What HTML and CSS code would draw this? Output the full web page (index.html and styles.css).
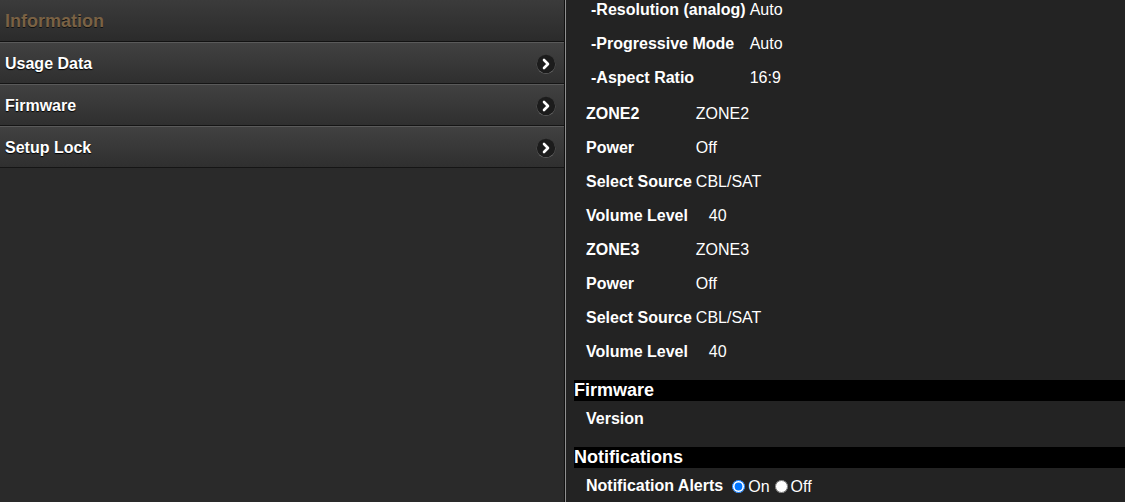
FILE: index.html
```html
<!DOCTYPE html>
<html lang="en">
<head>
<meta charset="utf-8">
<title>Information</title>
<link rel="stylesheet" href="styles.css">
</head>
<body>
<div class="app">
  <aside class="sidebar">
    <div class="side-header">Information</div>
    <ul class="menu">
      <li class="menu-item"><span class="menu-label">Usage Data</span>
        <svg class="chev" width="20" height="20" viewBox="0 0 20 20"><circle cx="10" cy="10.6" r="9.4" fill="#6a6a6a"/><circle cx="10" cy="10" r="9.2" fill="#1c1c1c"/><path d="M8 6 L12 10 L8 14" fill="none" stroke="#fff" stroke-width="2.6" stroke-linecap="round" stroke-linejoin="round"/></svg>
      </li>
      <li class="menu-item"><span class="menu-label">Firmware</span>
        <svg class="chev" width="20" height="20" viewBox="0 0 20 20"><circle cx="10" cy="10.6" r="9.4" fill="#6a6a6a"/><circle cx="10" cy="10" r="9.2" fill="#1c1c1c"/><path d="M8 6 L12 10 L8 14" fill="none" stroke="#fff" stroke-width="2.6" stroke-linecap="round" stroke-linejoin="round"/></svg>
      </li>
      <li class="menu-item"><span class="menu-label">Setup Lock</span>
        <svg class="chev" width="20" height="20" viewBox="0 0 20 20"><circle cx="10" cy="10.6" r="9.4" fill="#6a6a6a"/><circle cx="10" cy="10" r="9.2" fill="#1c1c1c"/><path d="M8 6 L12 10 L8 14" fill="none" stroke="#fff" stroke-width="2.6" stroke-linecap="round" stroke-linejoin="round"/></svg>
      </li>
    </ul>
  </aside>
  <main class="detail">
    <div class="group group-sub">
      <div class="lbl">-Resolution (analog)</div><div class="val">Auto</div>
      <div class="lbl">-Progressive Mode</div><div class="val">Auto</div>
      <div class="lbl">-Aspect Ratio</div><div class="val">16:9</div>
    </div>
    <div class="group group-zone">
      <div class="lbl">ZONE2</div><div class="val">ZONE2</div>
      <div class="lbl">Power</div><div class="val">Off</div>
      <div class="lbl">Select Source</div><div class="val">CBL/SAT</div>
      <div class="lbl">Volume Level</div><div class="val val-num">40</div>
    </div>
    <div class="group group-zone">
      <div class="lbl">ZONE3</div><div class="val">ZONE3</div>
      <div class="lbl">Power</div><div class="val">Off</div>
      <div class="lbl">Select Source</div><div class="val">CBL/SAT</div>
      <div class="lbl">Volume Level</div><div class="val val-num">40</div>
    </div>
    <h2 class="section">Firmware</h2>
    <div class="group group-zone">
      <div class="lbl">Version</div><div class="val"></div>
    </div>
    <h2 class="section">Notifications</h2>
    <div class="group group-zone">
      <div class="lbl">Notification Alerts</div>
      <div class="val radios"><label class="radio"><input type="radio" name="alerts" checked>On</label><label class="radio"><input type="radio" name="alerts">Off</label></div>
    </div>
  </main>
</div>
</body>
</html>
```

FILE: styles.css
```css
html, body {
  margin: 0;
  padding: 0;
  height: 100%;
  overflow: hidden;
}

body {
  font-family: "Liberation Sans", Arial, sans-serif;
  background: #232323;
  color: #fff;
}

.app {
  display: flex;
  height: 100vh;
}

.sidebar {
  width: 565px;
  flex: none;
  background: #2a2a2a;
  border-right: 1px solid #111;
  box-sizing: border-box;
}

.side-header {
  height: 41px;
  line-height: 43px;
  padding-left: 5px;
  font-size: 18px;
  font-weight: bold;
  color: #7a6244;
  text-shadow: 0 1px 0 #111;
  background: linear-gradient(#3b3b3b, #2b2b2b);
  border-bottom: 1px solid #121212;
}

.menu {
  list-style: none;
  margin: 0;
  padding: 0;
}

.menu-item {
  display: flex;
  align-items: center;
  justify-content: space-between;
  height: 40px;
  padding: 0 8px 0 5px;
  border-top: 1px solid #5a5a5a;
  border-bottom: 1px solid #151515;
  background: linear-gradient(#414141, #2f2f2f);
}

.menu-label {
  font-size: 16px;
  font-weight: bold;
  color: #fff;
  text-shadow: 0 1px 1px #000;
  padding-top: 2px;
}

.chev {
  display: block;
  margin-top: 1px;
}

.detail {
  flex: 1;
  border-left: 1px solid #909090;
  padding: 0 0 0 8px;
  background: #232323;
  overflow: hidden;
}

.group {
  display: grid;
  grid-template-columns: auto auto;
  justify-content: start;
  column-gap: 4px;
  grid-auto-rows: 34px;
  align-items: center;
  font-size: 16px;
}

.group-sub {
  margin-top: -8px;
  padding-left: 17px;
  margin-bottom: 2px;
}

.group-zone {
  padding-left: 12px;
}

.lbl {
  font-weight: bold;
  white-space: nowrap;
  padding-top: 2px;
}

.val {
  white-space: nowrap;
  padding-top: 2px;
}

.val-num {
  padding-left: 13px;
}

.section {
  margin: 12px 0 0 0;
  height: 21px;
  line-height: 21px;
  font-size: 18px;
  font-weight: bold;
  background: #000;
  color: #fff;
}

.radio {
  font-size: 16px;
}

.radio input {
  margin: 3px 3px 0 5px;
  width: 13px;
  height: 13px;
  vertical-align: -1px;
}
```
